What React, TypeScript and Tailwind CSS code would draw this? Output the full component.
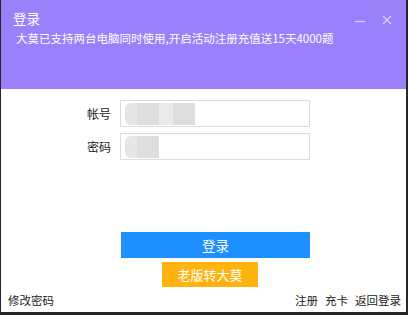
const font = { fontFamily: '"Noto Sans CJK SC", "Noto Sans", sans-serif' };

const BlurBlock = ({ wide }: { wide: boolean }) => (
  <div className="flex h-full items-center pl-[4px]">
    <div className={`flex h-[22px] ${wide ? "w-[70px]" : "w-[36px]"}`}>
      <div className="h-full w-[12px] rounded-l-[6px] bg-[#e6e6e6]" />
      <div className="h-full w-[22px] bg-[#dedede]" />
      {wide && <div className="h-full w-[14px] bg-[#eaeaea]" />}
      {wide && <div className="h-full w-[22px] bg-[#dddddd]" />}
    </div>
  </div>
);

export default function App() {
  return (
    <div
      className="flex h-[315px] w-[408px] flex-col bg-[#262626] pb-[3px] pl-px pr-[2px]"
      style={font}
    >
      <div className="flex h-[89px] flex-col bg-[#9b80fb] px-[12px] pt-[9px] text-white">
        <div className="flex items-start justify-between">
          <span className="text-[13.5px] leading-[18px]">登录</span>
          <div className="flex items-center gap-[16px] pr-[2px] text-[#d9d0ff]">
            <svg width="12" height="12" viewBox="0 0 12 12" className="mt-[6px]">
              <path d="M1 6.5h10" stroke="currentColor" strokeWidth="1.3" />
            </svg>
            <svg width="10" height="10" viewBox="0 0 10 10" className="mt-[3px]">
              <path d="M1 1l8 8M9 1l-8 8" stroke="currentColor" strokeWidth="1.4" />
            </svg>
          </div>
        </div>
        <p className="mt-[2px] pl-[3px] text-[11.5px] leading-[18px]">
          大莫已支持两台电脑同时使用,开启活动注册充值送15天4000题
        </p>
      </div>

      <div className="flex flex-1 flex-col bg-white text-[#222]">
        <div className="flex flex-col gap-[6px] pt-[11px]">
          <div className="flex items-center">
            <label className="w-[119px] pr-[9px] text-right text-[12px]">帐号</label>
            <div className="h-[27px] w-[190px] border border-[#dcdcdc]">
              <BlurBlock wide />
            </div>
          </div>
          <div className="flex items-center">
            <label className="w-[119px] pr-[9px] text-right text-[12px]">密码</label>
            <div className="h-[27px] w-[190px] border border-[#dcdcdc]">
              <BlurBlock wide={false} />
            </div>
          </div>
        </div>

        <button className="ml-[120px] mt-[72px] h-[26px] w-[189px] bg-[#1e8fff] text-[13.5px] text-white">
          登录
        </button>
        <button className="ml-[161px] mt-[4px] h-[25px] w-[96px] bg-[#ffb30f] text-[13px] text-white">
          老版转大莫
        </button>

        <div className="flex flex-1 items-center justify-between pl-[7px] pr-[5px] pt-[2px] text-[11.5px]">
          <span>修改密码</span>
          <div className="flex gap-[7px]">
            <span>注册</span>
            <span>充卡</span>
            <span>返回登录</span>
          </div>
        </div>
      </div>
    </div>
  );
}
